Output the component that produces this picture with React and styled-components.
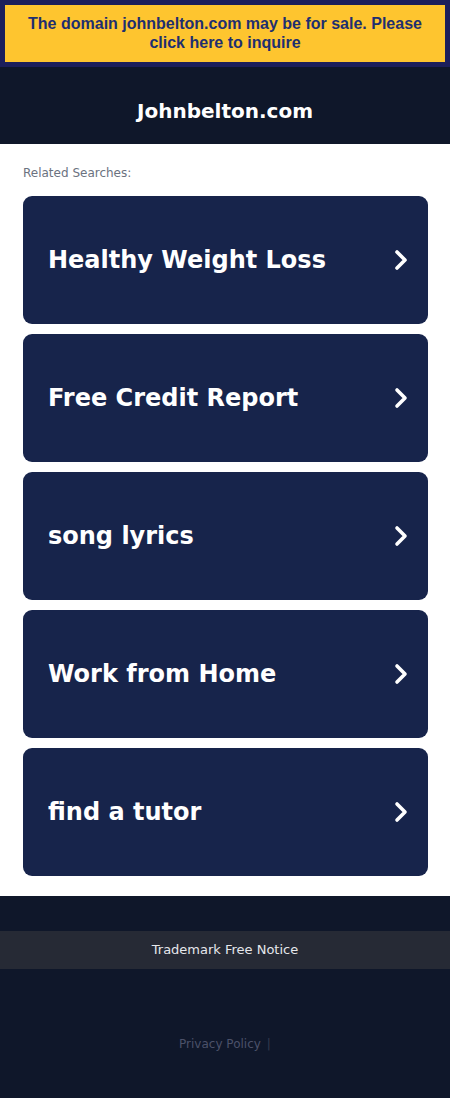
import React from 'react';
import styled, { createGlobalStyle } from 'styled-components';

const GlobalStyle = createGlobalStyle`
  html, body {
    margin: 0;
    padding: 0;
    background: #0f172a;
    font-family: "DejaVu Sans", sans-serif;
  }
`;

const SaleBar = styled.div`
  background: #1c1f5b;
  padding: 5px;
`;

const SaleLink = styled.a`
  display: block;
  background: #fec52f;
  color: #1e2f70;
  font-family: "Liberation Sans", Arial, sans-serif;
  font-weight: bold;
  font-size: 16px;
  line-height: 19px;
  text-align: center;
  padding: 9px 10px 10px;
  text-decoration: none;
`;

const Header = styled.header`
  background: #0f172a;
  height: 77px;
  display: flex;
  align-items: center;
  justify-content: center;
`;

const Title = styled.h1`
  margin: 10px 0 0;
  color: #ffffff;
  font-size: 20px;
  font-weight: bold;
`;

const Main = styled.main`
  background: #ffffff;
  padding: 22px 22px 20px 23px;
`;

const Label = styled.p`
  margin: 0 0 16px;
  color: #6b7280;
  font-size: 12px;
  line-height: 14px;
`;

const List = styled.div`
  display: flex;
  flex-direction: column;
  gap: 10px;
`;

const Card = styled.a`
  display: flex;
  align-items: center;
  justify-content: space-between;
  height: 128px;
  padding: 0 18px 0 25px;
  box-sizing: border-box;
  background: #17244b;
  border-radius: 9px;
  text-decoration: none;
`;

const CardText = styled.span`
  color: #ffffff;
  font-size: 24px;
  font-weight: bold;
`;

const Footer = styled.footer`
  background: #0f172a;
  padding: 35px 0 44px;
`;

const Notice = styled.div`
  background: #262a35;
  color: #e5e7eb;
  font-size: 13px;
  line-height: 38px;
  text-align: center;
`;

const Links = styled.div`
  margin-top: 66px;
  text-align: center;
  font-size: 12px;
  line-height: 18px;
  color: #4b5169;
`;

const Sep = styled.span`
  color: #343a4f;
  margin-left: 6px;
`;

const Chevron = () => (
  <svg width="18" height="22" viewBox="0 0 18 22">
    <polyline points="5,3 13,11 5,19" fill="none" stroke="#ffffff" strokeWidth="3.6" strokeLinecap="round" strokeLinejoin="round" />
  </svg>
);

const searches = ['Healthy Weight Loss', 'Free Credit Report', 'song lyrics', 'Work from Home', 'find a tutor'];

const App = () => (
  <>
    <GlobalStyle />
    <SaleBar>
      <SaleLink href="#">The domain johnbelton.com may be for sale. Please click here to inquire</SaleLink>
    </SaleBar>
    <Header>
      <Title>Johnbelton.com</Title>
    </Header>
    <Main>
      <Label>Related Searches:</Label>
      <List>
        {searches.map(s => (
          <Card href="#" key={s}>
            <CardText>{s}</CardText>
            <Chevron />
          </Card>
        ))}
      </List>
    </Main>
    <Footer>
      <Notice>Trademark Free Notice</Notice>
      <Links>
        Privacy Policy<Sep>|</Sep>
      </Links>
    </Footer>
  </>
);

export default App;
